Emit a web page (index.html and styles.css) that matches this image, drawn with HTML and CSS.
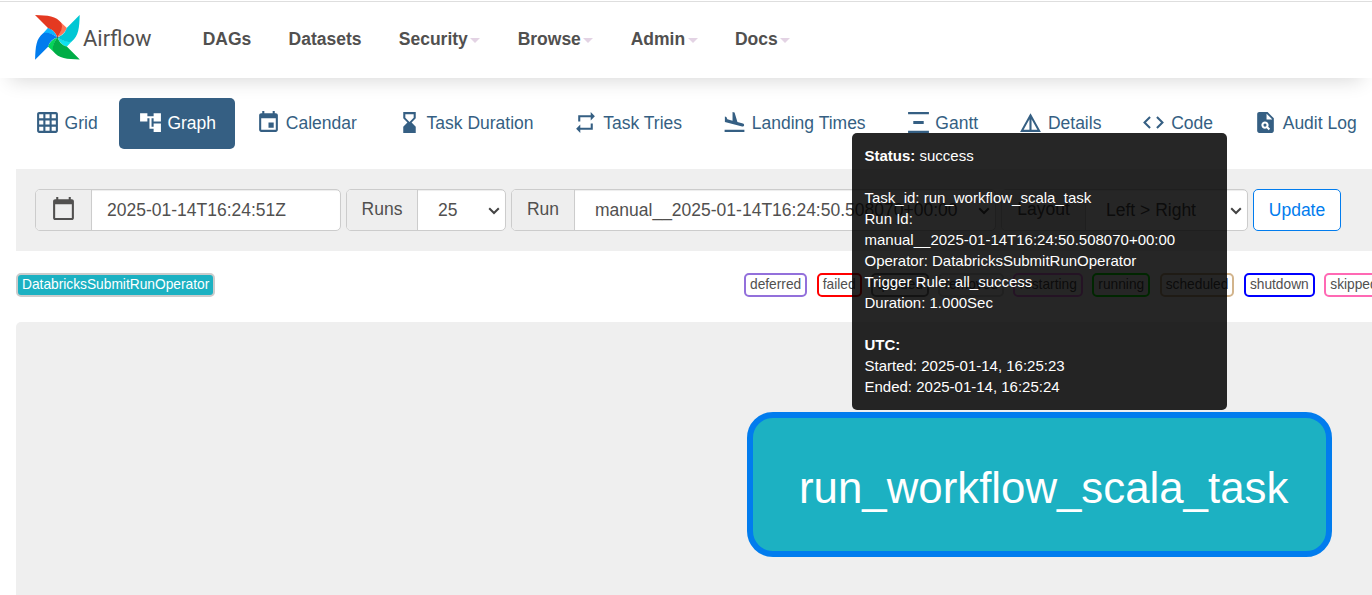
FILE: index.html
```html
<!DOCTYPE html>
<html lang="en">
<head>
<meta charset="utf-8">
<title>Airflow</title>
<link rel="stylesheet" href="styles.css">
</head>
<body>
<header class="navbar">
  <a class="brand">
    <svg class="logo" viewBox="0 0 120 45" width="120" height="45">
      <defs>
        <path id="blade" d="M0 0C13 .4 21 1 26.500 8C28 13 26 17 22.400 22.300C20.500 17.500 18 14.500 13 13Z"/>
        <path id="fold" d="M26.300 7.800L31.900 13C30.500 17 27.500 20.200 22.400 22.300C25.500 17.500 27.500 13 26.300 7.800Z"/>
      </defs>
      <g fill="#ff7557"><use href="#fold"/></g>
      <g fill="#11e1ee"><use href="#fold" transform="rotate(90 22.4 22.3)"/></g>
      <g fill="#04d659"><use href="#fold" transform="rotate(180 22.4 22.3)"/></g>
      <g fill="#0cb6ff"><use href="#fold" transform="rotate(270 22.4 22.3)"/></g>
      <g fill="#e43921"><use href="#blade"/></g>
      <g fill="#00c7d4"><use href="#blade" transform="rotate(90 22.4 22.3)"/></g>
      <g fill="#00ad46"><use href="#blade" transform="rotate(180 22.4 22.3)"/></g>
      <g fill="#017cee"><use href="#blade" transform="rotate(270 22.4 22.3)"/></g>
      <circle cx="22.400" cy="22.300" r=".8" fill="#51504f"/>
      <text class="logo-text" x="48" y="30.600" textLength="68.500" lengthAdjust="spacingAndGlyphs">Airflow</text>
    </svg>
  </a>
  <nav class="menu">
    <a>DAGs</a>
    <a>Datasets</a>
    <a>Security<b class="caret"></b></a>
    <a>Browse<b class="caret"></b></a>
    <a>Admin<b class="caret"></b></a>
    <a>Docs<b class="caret"></b></a>
  </nav>
</header>

<main class="content">
  <nav class="tabs">
    <a class="tab"><svg class="icon" viewBox="0 0 24 24"><path d="M20 2H4c-1.100 0-2 .9-2 2v16c0 1.100.9 2 2 2h16c1.100 0 2-.9 2-2V4c0-1.100-.9-2-2-2zM8 20H4v-4h4v4zm0-6H4v-4h4v4zm0-6H4V4h4v4zm6 12h-4v-4h4v4zm0-6h-4v-4h4v4zm0-6h-4V4h4v4zm6 12h-4v-4h4v4zm0-6h-4v-4h4v4zm0-6h-4V4h4v4z"/></svg>Grid</a>
    <a class="tab active"><svg class="icon" viewBox="0 0 24 24"><path d="M22 11V3h-7v3H9V3H2v8h7V8h2v10h4v3h7v-8h-7v3h-2V8h2v3z"/></svg>Graph</a>
    <a class="tab"><svg class="icon" viewBox="0 0 24 24"><path d="M17 12h-5v5h5v-5zM16 1v2H8V1H6v2H5c-1.110 0-1.990.9-1.990 2L3 19c0 1.100.89 2 2 2h14c1.100 0 2-.9 2-2V5c0-1.100-.9-2-2-2h-1V1h-2zm3 18H5V8h14v11z"/></svg>Calendar</a>
    <a class="tab"><svg class="icon" viewBox="0 0 24 24"><path d="M18 22l-.01-6L14 12l3.990-4.010L18 2H6v6l4 4-4 3.990V22h12zM8 7.500V4h8v3.500l-4 4-4-4z"/></svg>Task Duration</a>
    <a class="tab"><svg class="icon" viewBox="0 0 24 24"><path d="M7 7h10v3l4-4-4-4v3H5v6h2V7zm10 10H7v-3l-4 4 4 4v-3h12v-6h-2v4z"/></svg>Task Tries</a>
    <a class="tab"><svg class="icon" viewBox="0 0 24 24"><path d="M2.500 19h19v2h-19zm16.840-3.150c.8.21 1.620-.26 1.840-1.060.21-.8-.26-1.620-1.060-1.840l-5.310-1.420-2.760-9.020L10.120 2v8.280L5.150 8.950l-.93-2.320-1.450-.39v5.170l16.570 4.440z"/></svg>Landing Times</a>
    <a class="tab"><svg class="icon" viewBox="0 0 24 24"><path d="M22 2v2H2V2h20zM7 10.500v3h10v-3H7zM2 20v2h20v-2H2z"/></svg>Gantt</a>
    <a class="tab"><svg class="icon" viewBox="0 0 24 24"><path d="M12 3L2 21h20L12 3zM13 8.920L18.600 19H13V8.920zM11 8.920V19H5.400L11 8.920z" fill-rule="evenodd"/></svg>Details</a>
    <a class="tab"><svg class="icon" viewBox="0 0 24 24"><path d="M9.400 16.600L4.800 12l4.600-4.600L8 6l-6 6 6 6 1.400-1.400zm5.200 0l4.600-4.600-4.600-4.600L16 6l6 6-6 6-1.400-1.400z"/></svg>Code</a>
    <a class="tab"><svg class="icon" viewBox="0 0 24 24"><path fill-rule="evenodd" d="M14 2H6C4.900 2 4.010 2.900 4.010 4L4 20c0 1.100.89 2 1.990 2H18c1.100 0 2-.9 2-2V8L14 2zM15.040 19.450l-1.880-1.880c-1.330.71-3.010.53-4.130-.59c-1.370-1.370-1.370-3.580 0-4.950c1.370-1.370 3.580-1.370 4.950 0c1.120 1.120 1.310 2.800.59 4.130l1.880 1.880L15.040 19.450zM13 9V3.500L18.500 9H13z"/><circle cx="11.500" cy="14.500" r="1.500"/></svg>Audit Log</a>
  </nav>

  <form class="filters">
    <div class="group date">
      <span class="addon"><svg class="icon" viewBox="0 0 24 24"><path d="M20 3h-1V1h-2v2H7V1H5v2H4c-1.100 0-2 .9-2 2v16c0 1.100.9 2 2 2h16c1.100 0 2-.9 2-2V5c0-1.100-.9-2-2-2zm0 18H4V8h16v13z"/></svg></span>
      <span class="field">2025-01-14T16:24:51Z</span>
    </div>
    <div class="group runs">
      <span class="addon">Runs</span>
      <span class="field select">25<svg class="chevron" viewBox="0 0 12 8"><path d="M1.200 1.200L6 6L10.800 1.200"/></svg></span>
    </div>
    <div class="group run">
      <span class="addon">Run</span>
      <span class="field select">manual__2025-01-14T16:24:50.508070+00:00<svg class="chevron" viewBox="0 0 12 8"><path d="M1.200 1.200L6 6L10.800 1.200"/></svg></span>
    </div>
    <div class="group layout">
      <span class="addon">Layout</span>
      <span class="field select">Left &gt; Right<svg class="chevron" viewBox="0 0 12 8"><path d="M1.200 1.200L6 6L10.800 1.200"/></svg></span>
    </div>
    <span class="update">Update</span>
  </form>

  <div class="legend">
    <span class="chip operator">DatabricksSubmitRunOperator</span>
    <div class="states">
      <span class="chip deferred">deferred</span>
      <span class="chip failed">failed</span>
      <span class="chip queued">queued</span>
      <span class="chip removed">removed</span>
      <span class="chip restarting">restarting</span>
      <span class="chip running">running</span>
      <span class="chip scheduled">scheduled</span>
      <span class="chip shutdown">shutdown</span>
      <span class="chip skipped">skipped</span>
    </div>
  </div>

  <section class="graph">
    <div class="node">run_workflow_scala_task</div>
  </section>
</main>

<div class="tooltip">
  <strong>Status:</strong> success<br><br>
  Task_id: run_workflow_scala_task<br>
  Run Id:<br>manual__2025-01-14T16:24:50.508070+00:00<br>
  Operator: DatabricksSubmitRunOperator<br>
  Trigger Rule: all_success<br>
  Duration: 1.000Sec<br><br>
  <strong>UTC:</strong><br>
  Started: 2025-01-14, 16:25:23<br>
  Ended: 2025-01-14, 16:25:24
</div>
</body>
</html>
```

FILE: styles.css
```css
* { box-sizing: border-box; }

body {
  margin: 0;
  height: 595px;
  overflow: hidden;
  position: relative;
  background: #fff;
  color: #51504f;
  font: 17.5px/25px "Liberation Sans", Arial, sans-serif;
}

.navbar {
  display: flex;
  height: 78px;
  padding-left: 35px;
  border-top: 1px solid #fff;
  background: linear-gradient(#dedede 1px, #fff 1px);
  box-shadow: 0 12px 20px -10px rgba(0, 0, 0, .16);
}
.brand { padding-top: 14px; width: 149px; }
.logo { display: block; }
.logo-text { font: 22px Roboto, sans-serif; fill: #51504f; }
.menu { display: flex; padding-top: 26px; }
.menu a { padding: 0 18.65px; font-weight: bold; white-space: nowrap; }
.caret {
  display: inline-block;
  margin-left: 2.5px;
  vertical-align: middle;
  border-top: 5px solid #e3d3e4;
  border-left: 5px solid transparent;
  border-right: 5px solid transparent;
}

.content { padding: 20px 0 0 16px; }
.tabs { display: flex; gap: 2.38px; }
.tab {
  display: flex;
  align-items: center;
  flex: none;
  gap: 4.86px;
  height: 51px;
  padding: 0 18.75px;
  border-radius: 5px;
  color: #355f83;
  white-space: nowrap;
}
.tab.active { background: #355f83; color: #fff; }
.icon { width: 25px; height: 25px; fill: currentColor; flex: none; }
.tab .icon { margin-bottom: 2px; }
.addon .icon { margin-top: -1px; }

.filters {
  display: flex;
  gap: 5px;
  height: 82px;
  margin-top: 20px;
  padding: 20px 0 20px 19px;
  background: #efefef;
}
.group {
  display: flex;
  flex: none;
  height: 42px;
  border: 1px solid #ccc;
  border-radius: 5px;
  background: #fff;
  overflow: hidden;
}
.addon {
  display: flex;
  justify-content: center;
  flex: none;
  padding-top: 7px;
  border-right: 1px solid #ccc;
  background: #eee;
}
.field {
  display: flex;
  align-items: center;
  flex: 1;
  padding-left: 15px;
  box-shadow: inset 0 1px 1px rgba(0, 0, 0, .075);
}
.select { justify-content: space-between; padding: 0 5px 0 20px; }
.date { width: 306px; }
.date .addon { width: 56px; }
.runs { width: 160px; }
.runs .addon { width: 71px; }
.run { width: 485px; }
.run .addon { width: 63px; }
.layout { width: 247px; }
.layout .addon { width: 84px; }
.chevron { width: 12px; height: 8px; margin-top: 2px; fill: none; stroke: #444; stroke-width: 2; }
.update {
  flex: none;
  width: 88px;
  height: 42px;
  border: 1px solid #017cee;
  border-radius: 5px;
  background: #fff;
  color: #017cee;
  line-height: 40px;
  text-align: center;
}

.legend { display: flex; height: 71px; padding-top: 22px; }
.chip {
  flex: none;
  height: 24px;
  padding: 0 4px;
  border: 2px solid;
  border-radius: 5px;
  font-size: 13.75px;
  line-height: 19px;
  white-space: nowrap;
}
.operator { border-color: #ccc; background: #1cb1c2; }
.chip.operator { color: #fff; }
.operator { width: 199px; }
.states { display: flex; gap: 9.5px; flex: 1; min-width: 0; margin-left: 529px; }
.deferred { border-color: mediumpurple; }
.failed { border-color: red; }
.queued { border-color: gray; }
.removed { border-color: lightgrey; }
.restarting { border-color: violet; }
.running { border-color: lime; }
.scheduled { border-color: tan; }
.shutdown { border-color: blue; }
.skipped { border-color: hotpink; }

.graph {
  height: 273px;
  padding: 90px 0 0 731px;
  border-radius: 5px 0 0 0;
  background: #efefef;
}
.node {
  width: 585px;
  height: 145px;
  padding-left: 46px;
  border: 6.500px solid #017cee;
  border-radius: 26px;
  background: #1cb1c2;
  color: #fff;
  font-size: 43.8px;
  line-height: 139px;
  white-space: nowrap;
}

.tooltip {
  position: absolute;
  left: 852px;
  top: 133px;
  width: 375px;
  height: 277px;
  padding: 11.5px 12.5px;
  border-radius: 5px;
  background: rgba(0, 0, 0, .85);
  color: #fff;
  font-size: 15px;
  line-height: 21px;
}
```
